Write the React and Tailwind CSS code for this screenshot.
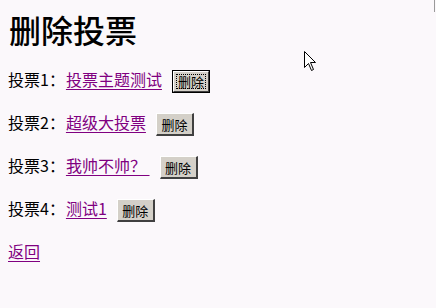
import React from "react";

const font = { fontFamily: '"Noto Sans CJK SC", "Noto Sans", sans-serif' };

function Btn({ focused }) {
  if (focused) {
    return (
      <span className="ml-[10px] mt-[6px] inline-flex h-[23px] w-[38px] border border-black">
        <span className="flex flex-1 border-t border-l border-b border-r border-t-white border-l-white border-b-[#404040] border-r-[#404040] bg-[#d4d0c8] p-[2px]">
          <span className="flex flex-1 items-center justify-center border border-dotted border-black text-[13px] leading-none text-black">
            删除
          </span>
        </span>
      </span>
    );
  }
  return (
    <span className="ml-[10px] mt-[6px] inline-flex h-[23px] w-[38px] items-center justify-center border-t border-l border-b-2 border-r-2 border-t-white border-l-white border-b-[#404040] border-r-[#404040] bg-[#d4d0c8] text-[13px] leading-none text-black">
      删除
    </span>
  );
}

function Row({ n, title, focused }) {
  return (
    <div className="flex h-[43px] items-center text-[16px] leading-none text-black">
      <span>投票{n}：</span>
      <a className="ml-[1px] text-[#800080] underline underline-offset-[3px] whitespace-pre">{title}</a>
      <Btn focused={focused} />
    </div>
  );
}

export default function App() {
  return (
    <div
      className="relative h-[308px] w-[436px] overflow-hidden bg-[#fbf8fb] pl-[9px]"
      style={font}
    >
      <div className="flex h-[57px] items-center text-[32px] font-medium leading-none text-black">
        删除投票
      </div>
      <div className="-ml-[1px]">
        <Row n={1} title="投票主题测试" focused />
        <Row n={2} title="超级大投票" />
        <Row n={3} title="我帅不帅？ " />
        <Row n={4} title="测试1" />
        <div className="flex h-[43px] items-center text-[16px] leading-none">
          <a className="text-[#800080] underline underline-offset-[3px]">返回</a>
        </div>
      </div>
      <div className="absolute right-[1px] top-0 h-[12px] w-[1px] bg-[#9a9a9a]" />
      <svg
        className="absolute left-[304px] top-[51px]"
        width="13"
        height="21"
        viewBox="0 0 13 21"
      >
        <path
          d="M0.5 0.5 L0.5 16.5 L4.5 12.5 L7.5 19.5 L9.5 18.5 L6.5 11.5 L11.5 11.5 Z"
          fill="white"
          stroke="black"
          strokeWidth="1"
        />
      </svg>
    </div>
  );
}
